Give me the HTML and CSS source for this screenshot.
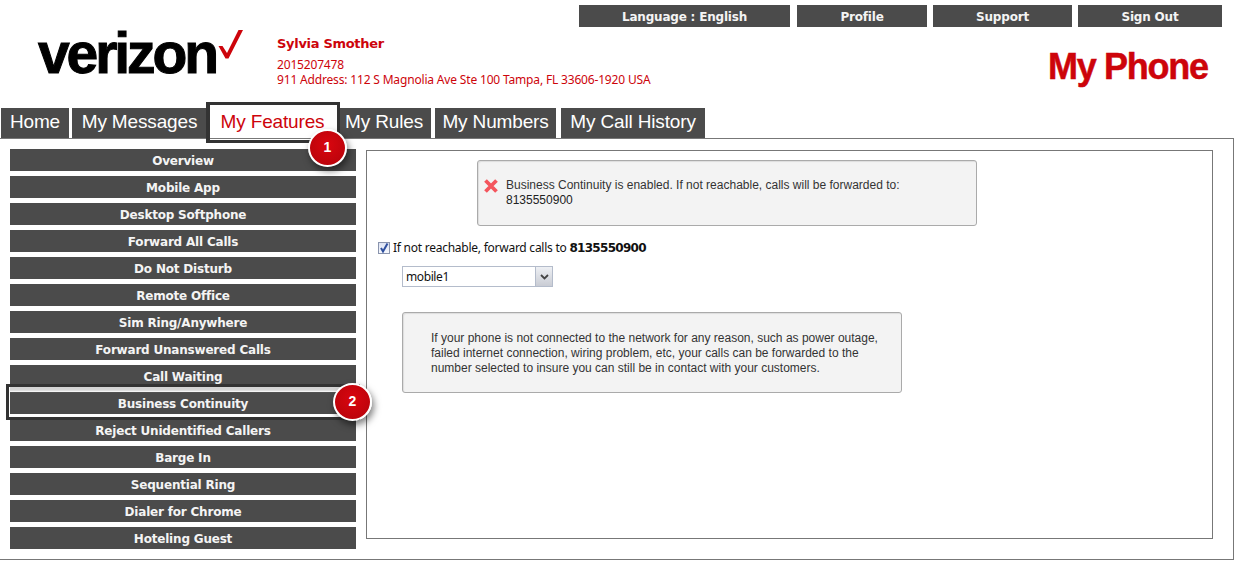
FILE: index.html
```html
<!DOCTYPE html>
<html lang="en">
<head>
<meta charset="utf-8">
<title>My Phone</title>
<link rel="stylesheet" href="styles.css">
</head>
<body>
<div class="top-links">
  <a class="top-link lang">Language : English</a>
  <a class="top-link profile">Profile</a>
  <a class="top-link support">Support</a>
  <a class="top-link signout">Sign Out</a>
</div>
<header class="masthead">
  <div class="logo"><span class="logo-word">verizon</span><svg class="logo-check" viewBox="0 0 26 30" width="26" height="30" aria-hidden="true"><path d="M21.500 0H26L11.500 28.500H8.500L1.500 16H5.500L10 23Z" fill="#cd040b"/></svg></div>
  <div class="user">
    <div class="user-name">Sylvia Smother</div>
    <div class="user-line">2015207478</div>
    <div class="user-line">911 Address: 112 S Magnolia Ave Ste 100 Tampa, FL 33606-1920 USA</div>
  </div>
  <div class="product">My Phone</div>
</header>
<nav class="tabs">
  <a class="tab t-home">Home</a>
  <a class="tab t-msg">My Messages</a>
  <a class="tab t-feat active">My Features<span class="badge badge-one">1</span></a>
  <a class="tab t-rules">My Rules</a>
  <a class="tab t-nums">My Numbers</a>
  <a class="tab t-hist">My Call History</a>
</nav>
<div class="frame">
  <aside class="side">
    <a class="side-item">Overview</a>
    <a class="side-item">Mobile App</a>
    <a class="side-item">Desktop Softphone</a>
    <a class="side-item">Forward All Calls</a>
    <a class="side-item">Do Not Disturb</a>
    <a class="side-item">Remote Office</a>
    <a class="side-item">Sim Ring/Anywhere</a>
    <a class="side-item">Forward Unanswered Calls</a>
    <a class="side-item">Call Waiting</a>
    <a class="side-item current">Business Continuity<span class="badge badge-two">2</span></a>
    <a class="side-item">Reject Unidentified Callers</a>
    <a class="side-item">Barge In</a>
    <a class="side-item">Sequential Ring</a>
    <a class="side-item">Dialer for Chrome</a>
    <a class="side-item">Hoteling Guest</a>
  </aside>
  <main class="panel">
    <div class="notice">
      <svg class="notice-x" viewBox="0 0 14 14" width="14" height="14" aria-hidden="true"><path d="M1.500 1.500 12.500 12.500M12.500 1.500 1.500 12.500" stroke="#f4555d" stroke-width="3.800"/></svg>
      <p class="notice-text">Business Continuity is enabled. If not reachable, calls will be forwarded to:<br><span class="notice-num">8135550900</span></p>
    </div>
    <label class="check-row">
      <span class="check"><svg viewBox="0 0 12 12" width="12" height="12" aria-hidden="true"><path d="M3 6 5 9.500 9.500 1.500" fill="none" stroke="#2f4f9e" stroke-width="2"/></svg></span>
      <span class="check-label">If not reachable, forward calls to <b class="num">8135550900</b></span>
    </label>
    <div class="select">
      <span class="select-value">mobile1</span>
      <span class="select-arrow"><svg viewBox="0 0 9 6" width="9" height="6" aria-hidden="true"><path d="M1 1 4.500 4.500 8 1" fill="none" stroke="#444" stroke-width="1.800"/></svg></span>
    </div>
    <div class="info">If your phone is not connected to the network for any reason, such as power outage, failed internet connection, wiring problem, etc, your calls can be forwarded to the number selected to insure you can still be in contact with your customers.</div>
  </main>
</div>
</body>
</html>
```
FILE: styles.css
```css
* { box-sizing: border-box; }
html, body { margin: 0; padding: 0; background: #fff; }
body { width: 1242px; height: 568px; overflow: hidden; font-family: "Noto Sans", sans-serif; color: #111; }

.top-links { display: flex; padding: 5px 0 0 579px; height: 27px; }
.top-link { height: 22px; background: #4b4b4b; color: #f4f4f4; font: bold 12px/24px "DejaVu Sans", sans-serif; text-align: center; letter-spacing: -0.2px; }
.lang { width: 211px; margin-right: 7px; }
.profile { width: 130px; margin-right: 6px; }
.support { width: 139px; margin-right: 6px; }
.signout { width: 144px; }

.masthead { display: flex; height: 81px; }
.logo { width: 277px; padding-left: 38px; position: relative; }
.logo-word { display: block; margin-top: -2px; font: bold 57px/1 "Liberation Sans", sans-serif; color: #000; letter-spacing: -3.1px; -webkit-text-stroke: 1px #000; white-space: nowrap; }
.logo-check { position: absolute; left: 217px; top: 3px; }
.user { width: 750px; color: #cd040b; padding-top: 9px; }
.user-name { font: bold 13px/16px "DejaVu Sans", sans-serif; margin-bottom: 5px; letter-spacing: -0.3px; }
.user-line { font: 12px/15px "Noto Sans", sans-serif; letter-spacing: -0.17px; }
.product { font: bold 36px/1 "Liberation Sans", sans-serif; color: #cd040b; letter-spacing: -1.3px; -webkit-text-stroke: 0.5px #cd040b; padding: 22px 0 0 21px; white-space: nowrap; }

.tabs { display: flex; height: 30px; padding-left: 1px; }
.tab { position: relative; display: block; height: 30px; background: #4b4b4b; color: #fff; font: 19px/28px "Liberation Sans", sans-serif; letter-spacing: -0.15px; text-align: center; white-space: nowrap; }
.t-home { width: 68px; margin-right: 3px; }
.t-msg { width: 135px; margin-right: 3px; }
.t-feat { width: 125px; margin-right: 2px; }
.t-rules { width: 94px; margin-right: 4px; }
.t-nums { width: 121px; margin-right: 5px; }
.t-hist { width: 144px; }
.tab.active { background: #fff; color: #cd040b; z-index: 1; }
.tab.active::after { content: ""; position: absolute; inset: -6px -5px -5px -4px; border: 3px solid #333; box-shadow: inset 1px 0 0 #333; }

.frame { display: flex; height: 422px; border: 1px solid #777; border-left: 0; width: 1234px; padding: 10px 19px 0 10px; }
.side { width: 346px; display: flex; flex-direction: column; gap: 5px; }
.side-item { position: relative; display: block; height: 22px; background: #4b4b4b; color: #f4f4f4; font: bold 12px/24px "DejaVu Sans", sans-serif; text-align: center; letter-spacing: -0.2px; }
.side-item.current { z-index: 1; }
.side-item.current::after { content: ""; position: absolute; inset: -8px -4px -6px -4px; border: 3px solid #333; box-shadow: inset 1px 0 0 #fff, inset 0 -3px 0 #fff, inset 0 5px 2px -1px #d4d4d4; }

.badge { position: absolute; width: 39px; height: 38px; border-radius: 50%; background: radial-gradient(circle at 50% 40%, #d9060f, #b3030a); border: 2px solid #fff; box-shadow: 2px 4px 7px rgba(0,0,0,.5); color: #fff; font: bold 14px/33px "Liberation Sans", sans-serif; text-align: center; letter-spacing: 0; z-index: 2; }
.badge-one { left: 98px; top: 21px; }
.badge-two { left: 323px; top: -9px; }

.panel { width: 847px; height: 389px; margin: 1px 0 0 10px; border: 1px solid #777; padding: 9px 0 0 11px; }
.notice { display: flex; margin-left: 99px; width: 500px; height: 66px; background: #f3f3f3; border: 1px solid #aaa; border-radius: 3px; box-shadow: inset 1px 1px 1px #ddd; padding: 17px 0 0 6px; color: #333; }
.notice-x { flex: none; margin-top: 1px; }
.notice-text { margin: 0 0 0 8px; font: 12px/15px "Liberation Sans", sans-serif; }
.notice-num { color: #222; }
.check-row { display: flex; align-items: center; height: 16px; margin-top: 14px; font: 12px/16px "Noto Sans", sans-serif; color: #111; }
.check { width: 12px; height: 12px; border: 1px solid #8a94ad; background: linear-gradient(#dde3f3, #f6f8fd); margin-right: 3px; display: flex; }
.check svg { margin: -1px; }
.check-label { letter-spacing: -0.25px; }
.num { font: bold 12px/16px "DejaVu Sans", sans-serif; letter-spacing: -0.7px; }
.select { display: flex; width: 151px; height: 21px; margin: 10px 0 0 24px; border: 1px solid #b4bccb; background: #fff; }
.select-value { flex: 1; padding-left: 3px; font: 12px/20px "Noto Sans", sans-serif; letter-spacing: -0.4px; color: #111; }
.select-arrow { width: 17px; background: linear-gradient(#eef0f4, #c9ccd4); border-left: 1px solid #b4bccb; display: flex; align-items: center; justify-content: center; }
.info { width: 500px; height: 81px; margin: 25px 0 0 24px; padding: 18px 20px 0 28px; background: #f3f3f3; border: 1px solid #aaa; border-radius: 3px; box-shadow: inset 1px 1px 1px #ddd; font: 12px/15px "Liberation Sans", sans-serif; color: #333; }
```
